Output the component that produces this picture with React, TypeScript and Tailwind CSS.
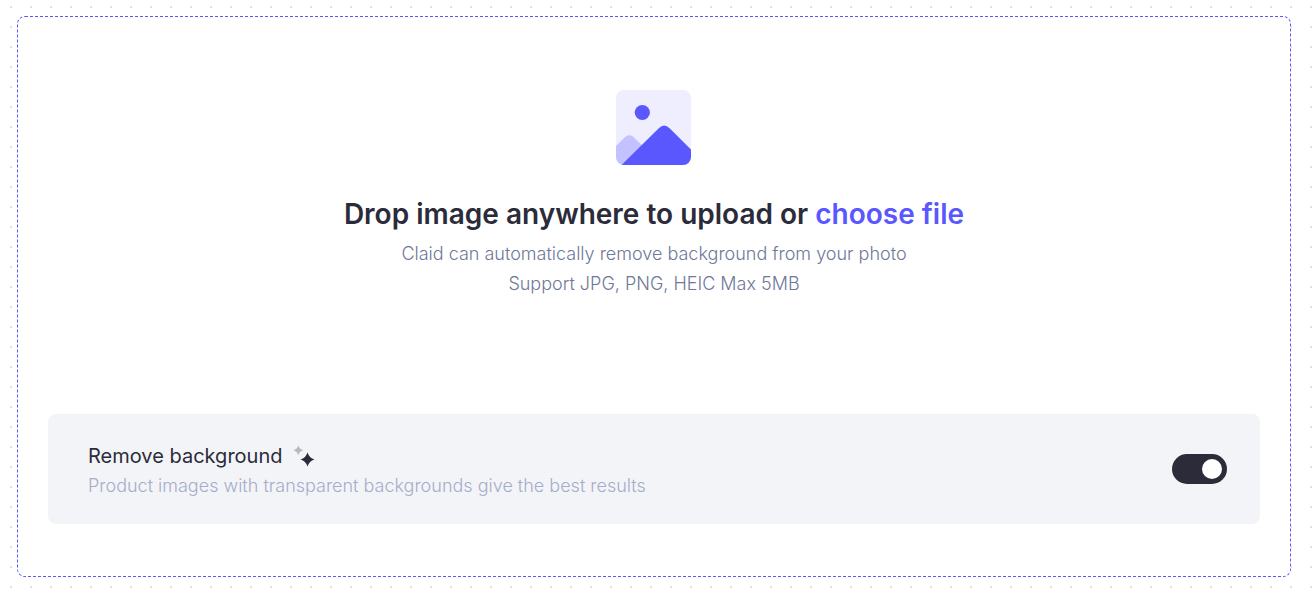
import { useRef, useState } from 'react';

function ImageIcon() {
  return (
    <svg width="76" height="75" viewBox="0 0 76 75" fill="none" aria-hidden="true">
      <defs>
        <clipPath id="image-frame">
          <rect width="75" height="75" rx="8" />
        </clipPath>
      </defs>
      <g clipPath="url(#image-frame)">
        <rect width="75" height="75" fill="#EEEEFF" />
        <path d="M-4 60L8.3 47.7Q13.3 43 18.3 47.7L46 75H-4Z" fill="#C3C1FF" />
        <path d="M5.5 75L42.8 38.2Q48.2 32.8 53.6 38.2L79 63.6V75Z" fill="#5B57FF" />
        <circle cx="26.3" cy="22.5" r="7.6" fill="#5B57FF" />
      </g>
    </svg>
  );
}

function SparklesIcon() {
  return (
    <svg width="22" height="22" viewBox="0 0 22 22" aria-hidden="true">
      <path d="M5.3 0.3Q6.3 4.3 10.3 5.3Q6.3 6.3 5.3 10.3Q4.3 6.3 0.3 5.3Q4.3 4.3 5.3 0.3Z" fill="#B7B8BE" />
      <path d="M14.5 7.5Q16.2 12.8 21.5 14.5Q16.2 16.2 14.5 21.5Q12.8 16.2 7.5 14.5Q12.8 12.8 14.5 7.5Z" fill="#2B2B3A" />
    </svg>
  );
}

export default function App() {
  const [removeBackground, setRemoveBackground] = useState(true);
  const fileInput = useRef<HTMLInputElement>(null);

  return (
    <main className="min-h-screen bg-white bg-[radial-gradient(circle,#dfe0e8_1px,transparent_1.5px)] bg-[length:20px_20px] bg-[position:1px_-3px] pt-4 pb-5 pl-[17px] pr-[22px] font-['Inter',sans-serif] text-[#2b2b3a]">
      <section className="flex flex-col rounded-lg border border-dashed border-[#5b57ff] bg-white px-[30px] pt-[73px] pb-[52px]">
        <div className="flex flex-col items-center text-center">
          <ImageIcon />
          <h1 className="mt-[31px] text-[28px] leading-9 font-semibold">
            Drop image anywhere to upload or{' '}
            <button
              type="button"
              onClick={() => fileInput.current?.click()}
              className="cursor-pointer text-[#5b57ff]"
            >
              choose file
            </button>
          </h1>
          <input ref={fileInput} type="file" accept=".jpg,.jpeg,.png,.heic" className="hidden" />
          <p className="mt-[7px] text-lg leading-[30px] font-light text-[#6f7898]">
            Claid can automatically remove background from your photo
            <br />
            Support JPG, PNG, HEIC Max 5MB
          </p>
        </div>

        <div className="mt-[115px] flex items-center justify-between rounded-lg bg-[#f3f4f8] py-[23px] pr-[33px] pl-10">
          <div className="pt-1">
            <label htmlFor="remove-background" className="flex items-center gap-[11px] text-xl leading-[30px]">
              Remove background
              <SparklesIcon />
            </label>
            <p className="text-lg leading-[30px] font-light text-[#a6adc9]">
              Product images with transparent backgrounds give the best results
            </p>
          </div>
          <input
            id="remove-background"
            type="checkbox"
            role="switch"
            checked={removeBackground}
            onChange={e => setRemoveBackground(e.target.checked)}
            className="flex h-[30px] w-[55px] shrink-0 cursor-pointer appearance-none items-center rounded-full bg-[#b3b9d1] px-[5px] before:size-5 before:rounded-full before:bg-white checked:justify-end checked:bg-[#2b2b3a]"
          />
        </div>
      </section>
    </main>
  );
}
